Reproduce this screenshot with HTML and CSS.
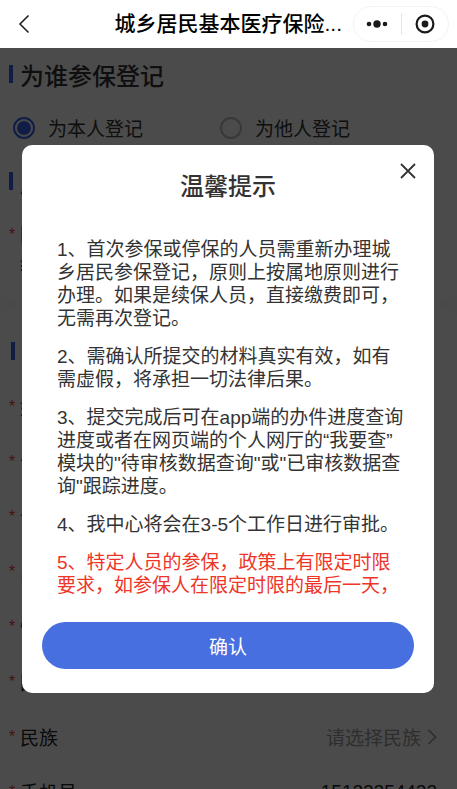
FILE: index.html
```html
<!DOCTYPE html>
<html lang="zh-CN">
<head>
<meta charset="utf-8">
<meta name="viewport" content="width=device-width, initial-scale=1">
<title>城乡居民基本医疗保险</title>
<link rel="stylesheet" href="styles.css">
</head>
<body>
<header class="navbar">
  <button class="back" type="button" aria-label="返回">
    <svg width="12" height="20" viewBox="0 0 12 20"><path d="M10.5 1.500L2 10l8.500 8.500" fill="none" stroke="#222" stroke-width="1.600"/></svg>
  </button>
  <h1 class="navbar-title">城乡居民基本医疗保险...</h1>
  <div class="capsule">
    <button type="button" aria-label="更多">
      <svg width="22" height="10" viewBox="0 0 22 10" fill="#1a1a1a"><circle cx="3" cy="5" r="2.300"/><circle cx="11" cy="5" r="3.700"/><circle cx="19" cy="5" r="2.300"/></svg>
    </button>
    <button type="button" aria-label="关闭">
      <svg width="20" height="20" viewBox="0 0 20 20"><circle cx="10" cy="10" r="8.400" fill="none" stroke="#1a1a1a" stroke-width="2.200"/><circle cx="10" cy="10" r="3.400" fill="#1a1a1a"/></svg>
    </button>
  </div>
</header>
<main class="stage">
  <form class="page">
    <section class="card">
      <h2 class="section-title">为谁参保登记</h2>
      <div class="choices">
        <label class="choice"><input type="radio" name="who" checked>为本人登记</label>
        <label class="choice"><input type="radio" name="who">为他人登记</label>
      </div>
      <h2 class="section-title">居</h2>
      <div class="field field-tall"><span class="required">*</span><span class="label">国<br>缴</span></div>
    </section>
    <section class="card card-info">
      <h2 class="section-title">居</h2>
      <div class="field"><span class="required">*</span><span class="label">姓</span></div>
      <div class="field"><span class="required">*</span><span class="label">证</span></div>
      <div class="field"><span class="required">*</span><span class="label">证</span></div>
      <div class="field"><span class="required">*</span><span class="label">出</span></div>
      <div class="field"><span class="required">*</span><span class="label">性</span></div>
      <div class="field"><span class="required">*</span><span class="label">国</span></div>
      <div class="field"><span class="required">*</span><span class="label">民族</span>
        <button class="picker" type="button">请选择民族
          <svg width="10" height="18" viewBox="0 0 10 18"><path d="M1.500 2l7 7-7 7" fill="none" stroke="currentColor" stroke-width="1.600"/></svg>
        </button>
      </div>
      <div class="field"><span class="required">*</span><label class="label" for="phone">手机号</label><input class="phone" id="phone" type="tel" value="15122254422"></div>
    </section>
  </form>
  <div class="mask">
    <section class="dialog" role="dialog" aria-modal="true" aria-labelledby="tip-title">
      <button class="close" type="button" aria-label="关闭提示">
        <svg width="16" height="16" viewBox="0 0 16 16"><path d="M1 1l14 14M15 1L1 15" stroke="#333" stroke-width="1.800"/></svg>
      </button>
      <h2 class="dialog-title" id="tip-title">温馨提示</h2>
      <div class="dialog-body">
        <p>1、首次参保或停保的人员需重新办理城乡居民参保登记，原则上按属地原则进行办理。如果是续保人员，直接缴费即可，无需再次登记。</p>
        <p>2、需确认所提交的材料真实有效，如有需虚假，将承担一切法律后果。</p>
        <p>3、提交完成后可在app端的办件进度查询进度或者在网页端的个人网厅的“我要查”模块的"待审核数据查询"或"已审核数据查询"跟踪进度。</p>
        <p>4、我中心将会在3-5个工作日进行审批。</p>
        <p class="warning">5、特定人员的参保，政策上有限定时限要求，如参保人在限定时限的最后一天，</p>
      </div>
      <button class="confirm" type="button">确认</button>
    </section>
  </div>
</main>
</body>
</html>
```
FILE: styles.css
```css
* {
  box-sizing: border-box;
}

body {
  display: flex;
  flex-direction: column;
  height: 100vh;
  margin: 0;
  overflow: hidden;
  color: #333;
  font-family: "Liberation Sans", "Noto Sans CJK SC", sans-serif;
  font-size: 19px;
}

h1, h2, p {
  margin: 0;
}

button {
  padding: 0;
  border: 0;
  background: none;
  color: inherit;
  font: inherit;
}

svg {
  display: block;
}

.navbar {
  display: flex;
  flex: none;
  align-items: center;
  height: 48px;
  padding: 0 8px 0 18px;
  background: #fff;
}

.navbar-title {
  flex: 1;
  padding-right: 11px;
  color: #000;
  font-size: 21px;
  font-weight: 500;
  line-height: 32px;
  text-align: right;
  white-space: nowrap;
}

.capsule {
  display: flex;
  flex: none;
  align-items: center;
  width: 96px;
  height: 36px;
  border: 1px solid #f3f3f3;
  border-radius: 18px;
}

.capsule button {
  display: flex;
  flex: 1;
  align-items: center;
  justify-content: center;
  height: 22px;
}

.capsule button + button {
  border-left: 1px solid #e5e5e5;
}

.stage {
  position: relative;
  flex: 1;
  min-height: 0;
  overflow: hidden;
  background: #f9f9f9;
}

.card {
  padding: 7px 20px 0 9px;
  border-radius: 10px;
  background: #fbfbfb;
}

.card-info {
  margin-top: 8px;
  padding-top: 24px;
}

.section-title {
  display: flex;
  gap: 7px;
  align-items: center;
  height: 38px;
  font-size: 24px;
  font-weight: 500;
}

.card-info .section-title {
  margin-bottom: 9px;
  padding-left: 2px;
}

.section-title::before {
  width: 4px;
  height: 18px;
  background: #3a62e8;
  content: "";
}

.choices {
  display: grid;
  grid-template-columns: 207px 1fr;
  align-items: center;
  height: 69px;
  padding-left: 4px;
}

.choice {
  display: flex;
  gap: 13px;
  align-items: center;
}

.choice input {
  width: 22px;
  height: 22px;
  margin: 0;
  border: 2px solid #bbb;
  border-radius: 50%;
  appearance: none;
}

.choice input:checked {
  padding: 2px;
  border-color: #3a62e8;
  background: #3a62e8;
  background-clip: content-box;
}

.field {
  display: flex;
  align-items: center;
  height: 55px;
  color: #222;
}

.field-tall {
  height: 100px;
  line-height: 29px;
}

.required {
  width: 11px;
  color: #e64545;
  font-size: 16px;
}

.field-tall .required {
  align-self: flex-start;
  padding-top: 20px;
}

.picker {
  display: flex;
  gap: 6px;
  align-items: center;
  margin-left: auto;
  color: #999;
}

.phone {
  flex: 1;
  min-width: 0;
  padding: 0;
  border: 0;
  background: none;
  color: inherit;
  font: inherit;
  text-align: right;
}

.mask {
  position: absolute;
  inset: 0;
  display: flex;
  align-items: center;
  padding: 0 23px 0 22px;
  background: rgba(0, 0, 0, 0.7);
}

.dialog {
  position: relative;
  width: 100%;
  padding: 24px 20px;
  border-radius: 10px;
  background: #fff;
}

.close {
  position: absolute;
  top: 18px;
  right: 18px;
}

.dialog-title {
  font-size: 24px;
  font-weight: 500;
  line-height: 36px;
  text-align: center;
}

.dialog-body {
  display: grid;
  gap: 15px;
  margin-bottom: 25px;
  padding: 33px 7px 0 15px;
  line-height: 23px;
}

.warning {
  color: #ee3528;
}

.confirm {
  display: block;
  width: 100%;
  height: 47px;
  border-radius: 24px;
  background: #486fe0;
  color: #fff;
}
```
